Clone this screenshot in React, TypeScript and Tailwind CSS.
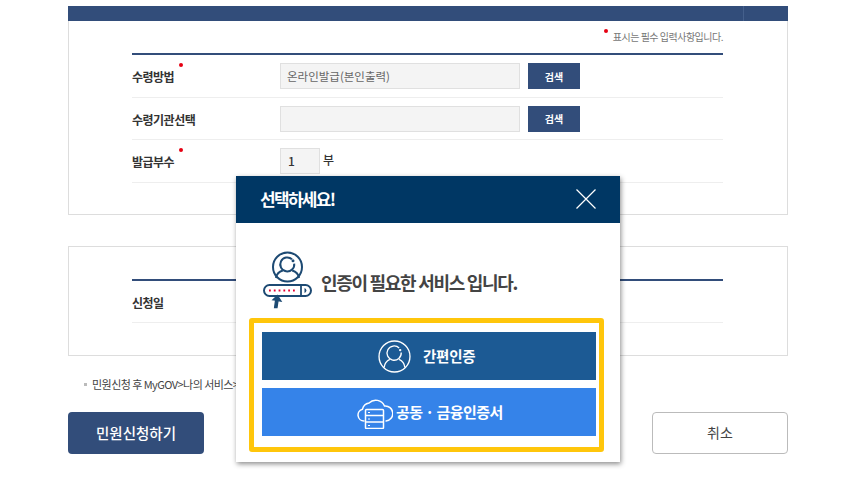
function Dot({ className }: { className: string }) {
  return <span className={`absolute w-[4px] h-[4px] rounded-full bg-[#e60012] ${className}`} />;
}

function Row({ label, required, h, children }: { label: string; required?: boolean; h: string; children?: React.ReactNode }) {
  return (
    <div className={`flex items-center border-b border-[#eeeeee] ${h}`}>
      <div className="relative w-[148px] text-[12px] font-bold text-[#333] tracking-[-0.5px]">
        <span className="relative top-[1px]">{label}</span>
        {required && <Dot className="left-[47px] top-[-4px]" />}
      </div>
      {children}
    </div>
  );
}

function SearchBtn() {
  return (
    <button className="w-[52px] h-[26px] bg-[#324d7a] text-white text-[10px] font-bold ml-[8px]">검색</button>
  );
}

export default function App() {
  return (
    <div className="relative w-[859px] h-[488px] bg-white overflow-hidden font-['Noto_Sans_CJK_KR','Noto_Sans',sans-serif]">
      <div className="w-[720px] ml-[68px] pt-[6px]">
        <div className="h-[15px] bg-[#324d7a] flex justify-end pr-[44px]">
          <span className="w-px h-full bg-[#45608c]" />
        </div>
        <div className="h-[194px] border-x border-b border-[#dddddd] pl-[63px] pr-[64px]">
          <div className="relative h-[32px] flex items-end justify-end pb-[9px] text-[10px] leading-[14px] text-[#777] tracking-[-0.5px]">
            <span className="relative">
              <Dot className="left-[-9px] top-[-1px]" />
              표시는 필수 입력사항입니다.
            </span>
          </div>
          <div className="h-[2px] bg-[#324d7a]" />
          <Row label="수령방법" required h="h-[43px]">
            <div className="w-[240px] h-[26px] bg-[#f4f4f4] border border-[#e0e0e0] pl-[6px] pt-[1px] flex items-center text-[11.5px] text-[#666]">
              온라인발급(본인출력)
            </div>
            <SearchBtn />
          </Row>
          <Row label="수령기관선택" h="h-[42px]">
            <div className="w-[240px] h-[26px] bg-[#f4f4f4] border border-[#e0e0e0]" />
            <SearchBtn />
          </Row>
          <Row label="발급부수" required h="h-[43px]">
            <div className="w-[40px] h-[26px] bg-[#f4f4f4] border border-[#e0e0e0] pl-[7px] flex items-center text-[12px] font-medium text-[#333]">
              1
            </div>
            <span className="ml-[3px] text-[12px] text-[#333] font-medium relative top-[-1px]">부</span>
          </Row>
        </div>

        <div className="mt-[31px] h-[110px] border border-[#dddddd] pl-[63px] pr-[64px] pt-[32px]">
          <div className="h-[2px] bg-[#324d7a]" />
          <Row label="신청일" h="h-[42px]" />
        </div>

        <div className="mt-[21px] h-[14px] flex items-center pl-[16px] text-[11px] text-[#444] tracking-[-0.55px] whitespace-nowrap">
          <span className="w-[3px] h-[3px] bg-[#bbbbbb] mr-[5px]" />
          민원신청 후 MyGOV&gt;나의 서비스&gt;민원신청내역에서 확인하실 수 있습니다.
        </div>

        <div className="mt-[21px] flex justify-between">
          <button className="w-[136px] h-[42px] rounded-[4px] bg-[#324d7a] text-white text-[14.5px] font-medium pb-[1px]">민원신청하기</button>
          <button className="w-[136px] h-[42px] rounded-[4px] bg-white border border-[#bbbbbb] text-[#444] text-[14px] pb-[1px]">취소</button>
        </div>
      </div>

      {/* modal */}
      <div className="absolute left-[236px] top-[176px] w-[384px] h-[286px] bg-white shadow-[1px_2px_5px_rgba(0,0,0,0.45)]">
        <div className="h-[47px] bg-[#003764] flex items-center justify-between pl-[24px] pr-[24px] pb-[1px] text-white">
          <span className="text-[17px] font-bold tracking-[-1.7px]">선택하세요!</span>
          <svg width="20" height="20" viewBox="0 0 20 20" stroke="#fff" strokeWidth="1.2" fill="none">
            <path d="M0.5 0.5L19.5 19.5M19.5 0.5L0.5 19.5" />
          </svg>
        </div>
        <div className="h-[95px] flex items-start pl-[27px] pt-[28px]">
          <svg width="50" height="58" viewBox="0 0 50 58" fill="none" stroke="#1d4a73" strokeWidth="1.6" className="shrink-0">
            <circle cx="24.500" cy="16" r="14.500" strokeWidth="2" />
            <path d="M29 8.300a7 7 0 1 0 2.200 4.300" strokeWidth="2" />
            <circle cx="30" cy="9.800" r="0.700" />
            <path d="M19.800 19.500C16.200 20.500 13.500 23.500 13 27M29.200 19.500c3.600 1 6.300 4 6.800 7.500" strokeWidth="2" />
            <rect x="1" y="34" width="47" height="11" rx="5.500" strokeWidth="2" />
            <path d="M38 34V45" strokeWidth="1.800" />
            <path d="M41.500 37v5a2.600 2.600 0 0 0 0-5z" fill="#1d4a73" stroke="none" />
            <path d="M6 39.500h28" stroke="#e60033" strokeWidth="1.800" strokeDasharray="1.800 3" />
            <path d="M14.500 44.500l-4.500 4.300 2.600.3-1 7.400h2.400l1-6.800 3 .5z" strokeWidth="1.300" fill="#1d4a73" />
          </svg>
          <span className="ml-[8px] mt-[18px] text-[18px] leading-[26px] font-bold text-[#444] tracking-[-1.3px] whitespace-nowrap">
            인증이 필요한 서비스 입니다.
          </span>
        </div>
        <div className="mx-[13px] w-[355px] h-[134px] border-[5px] border-[#ffc60b] rounded-[3px] pt-[9px] px-[8px] flex flex-col gap-[8px]">
          <button className="h-[48px] w-[334px] bg-[#1c5a94] flex items-center text-white text-[14.500px] font-bold tracking-[-0.25px] pl-[116px]">
            <svg width="33" height="33" viewBox="0 0 32 32" fill="none" stroke="#fff" strokeWidth="1.300" className="shrink-0">
              <circle cx="16" cy="16" r="15" />
              <path d="M20.500 7.800a6.900 6.900 0 1 0 2 4.300" />
              <circle cx="21.500" cy="9.800" r="0.500" />
              <path d="M11.500 18.800C8.300 20.300 6.300 23.300 6 26.500M20.500 18.800c3.200 1.500 5.200 4.500 5.500 7.700" />
            </svg>
            <span className="ml-[12px]">간편인증</span>
          </button>
          <button className="h-[48px] w-[334px] bg-[#3583e9] flex items-center text-white text-[15px] font-bold tracking-[-0.55px] pl-[95px]">
            <svg width="36" height="33" viewBox="0 0 36 33" fill="none" stroke="#fff" strokeWidth="1.500" className="shrink-0">
              <path d="M7.500 25H7a6 6 0 0 1-1.500-11.800A8 8 0 0 1 12 7a9.500 9.500 0 0 1 15.500 3 7.500 7.500 0 0 1 1.500 15h-.5" />
              <rect x="8.500" y="13.500" width="18" height="19" rx="1" fill="#3583e9" />
              <path d="M8.500 19.500h18M8.500 26h18" />
              <path d="M11 16.500h2M11 23h2M11 29.500h2" strokeWidth="1" />
            </svg>
            <span className="ml-[3px]">공동 · 금융인증서</span>
          </button>
        </div>
      </div>
    </div>
  );
}
